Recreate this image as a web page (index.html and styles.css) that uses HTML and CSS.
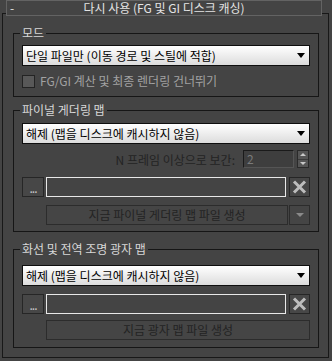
FILE: index.html
```html
<!DOCTYPE html>
<html>
  <head>
    <meta charset="utf-8">
    <link rel="stylesheet" href="styles.css">
  </head>
  <body>
    <div class="rollout">
      <div class="rollout-title">
        <span class="collapse">-</span>
        <span class="title-text">다시 사용 (FG 및 GI 디스크 캐싱)</span>
      </div>

      <div class="group group-mode">
        <div class="legend"><span>모드</span></div>
        <div class="dropdown">
          <span>단일 파일만 (이동 경로 및 스틸에 적합)</span>
          <span class="caret"></span>
        </div>
        <div class="check-row">
          <span class="checkbox"></span>
          <span class="check-label">FG/GI 계산 및 최종 렌더링 건너뛰기</span>
        </div>
      </div>

      <div class="group group-fg">
        <div class="legend"><span>파이널 게더링 맵</span></div>
        <div class="dropdown">
          <span>해제 (맵을 디스크에 캐시하지 않음)</span>
          <span class="caret"></span>
        </div>
        <div class="spinner-row">
          <span class="disabled-text">N 프레임 이상으로 보간:</span>
          <span class="spinner-input">2</span>
          <span class="spin-arrows">
            <span class="spin-up"></span>
            <span class="spin-down"></span>
          </span>
        </div>
        <div class="file-row">
          <button class="browse-btn">...</button>
          <div class="file-field"></div>
          <button class="clear-btn">
            <svg width="15" height="14" viewBox="0 0 15 14">
              <path d="M2 1.5 L13 12.5 M13 1.5 L2 12.5" stroke="#bdbdbd" stroke-width="3"/>
            </svg>
          </button>
        </div>
        <div class="generate-row">
          <button class="generate-btn">지금 파이널 게더링 맵 파일 생성</button>
          <button class="menu-btn"><span class="small-caret"></span></button>
        </div>
      </div>

      <div class="group group-photon">
        <div class="legend"><span>화선 및 전역 조명 광자 맵</span></div>
        <div class="dropdown">
          <span>해제 (맵을 디스크에 캐시하지 않음)</span>
          <span class="caret"></span>
        </div>
        <div class="file-row">
          <button class="browse-btn">...</button>
          <div class="file-field"></div>
          <button class="clear-btn">
            <svg width="15" height="14" viewBox="0 0 15 14">
              <path d="M2 1.5 L13 12.5 M13 1.5 L2 12.5" stroke="#bdbdbd" stroke-width="3"/>
            </svg>
          </button>
        </div>
        <div class="generate-row">
          <button class="generate-btn">지금 광자 맵 파일 생성</button>
        </div>
      </div>
    </div>
  </body>
</html>
```

FILE: styles.css
```css
body {
  margin: 0;
  background-color: #444444;
  font-family: "Noto Sans CJK KR", "Noto Sans", sans-serif;
  font-size: 12px;
  color: #dcdcdc;
}

.rollout {
  box-sizing: border-box;
  width: 327px;
  height: 345px;
  margin: 13px 0 0 2px;
  border: 1px solid #181818;
}

.rollout-title {
  box-sizing: border-box;
  display: flex;
  align-items: center;
  width: 316px;
  height: 16px;
  margin: -14px 0 0 3px;
  border: 1px solid #636363;
  background-color: #444444;
  line-height: 14px;
  color: #e4e4e4;
}

.collapse {
  width: 14px;
  padding-left: 3px;
  box-sizing: border-box;
}

.title-text {
  flex: 1;
  text-align: center;
  padding-right: 14px;
}

.group {
  box-sizing: border-box;
  width: 306px;
  margin-left: 10px;
  padding: 0 8px;
  border: 1px solid #161616;
}

.group-mode {
  margin-top: 17px;
  padding-bottom: 8px;
}

.group-fg {
  margin-top: 13px;
  padding-bottom: 6px;
}

.group-photon {
  margin-top: 17px;
  padding-bottom: 7px;
}

.legend {
  height: 16px;
  margin-top: -9px;
  line-height: 16px;
}

.legend span {
  margin-left: -2px;
  padding: 0 2px;
  background-color: #444444;
  color: #d8d8d8;
}

.dropdown {
  box-sizing: border-box;
  display: flex;
  align-items: center;
  justify-content: space-between;
  height: 21px;
  padding: 0 3px 0 3px;
  border: 1px solid #0e0e0e;
  background: linear-gradient(#ffffff, #dcdcdc);
  color: #000000;
  line-height: 19px;
}

.group-mode .dropdown {
  margin-top: 4px;
}

.group-fg .dropdown {
  margin-top: 5px;
}

.group-photon .dropdown {
  margin-top: 8px;
}

.caret {
  width: 0;
  height: 0;
  border-left: 4px solid transparent;
  border-right: 4px solid transparent;
  border-top: 5px solid #000000;
  margin-right: 1px;
}

.check-row {
  display: flex;
  align-items: center;
  gap: 5px;
  height: 14px;
  margin-top: 8px;
}

.checkbox {
  box-sizing: border-box;
  width: 13px;
  height: 13px;
  border: 1px solid #232323;
  background-color: #585858;
}

.check-label {
  color: #a2a2a2;
  line-height: 14px;
}

.spinner-row {
  display: flex;
  align-items: center;
  justify-content: flex-end;
  height: 18px;
  margin-top: 6px;
  padding-right: 1px;
}

.disabled-text {
  color: #232323;
  margin-right: 8px;
}

.spinner-input {
  box-sizing: border-box;
  width: 51px;
  height: 18px;
  padding-left: 3px;
  border: 1px solid #1a1a1a;
  border-right-color: #555555;
  border-bottom-color: #555555;
  background-color: #3e3e3e;
  color: #7a7a7a;
  line-height: 16px;
}

.spin-arrows {
  box-sizing: border-box;
  display: flex;
  flex-direction: column;
  width: 12px;
  height: 18px;
  margin-left: 3px;
  border: 1px solid #2a2a2a;
  background-color: #555555;
}

.spin-up,
.spin-down {
  flex: 1;
  display: flex;
  align-items: center;
  justify-content: center;
}

.spin-up {
  border-bottom: 1px solid #3a3a3a;
}

.spin-up::after {
  content: "";
  border-left: 3px solid transparent;
  border-right: 3px solid transparent;
  border-bottom: 3px solid #c8c8c8;
}

.spin-down::after {
  content: "";
  border-left: 3px solid transparent;
  border-right: 3px solid transparent;
  border-top: 3px solid #c8c8c8;
}

.file-row {
  display: flex;
  align-items: stretch;
  height: 20px;
}

.group-fg .file-row {
  margin-top: 9px;
}

.group-photon .file-row {
  margin-top: 8px;
}

button {
  margin: 0;
  padding: 0;
  font-family: inherit;
  font-size: 12px;
  box-sizing: border-box;
  border: 1px solid #262626;
  background-color: #474747;
}

.browse-btn {
  width: 22px;
  color: #c8c8c8;
  line-height: 14px;
  letter-spacing: -1px;
  padding-top: 2px;
}

.file-field {
  box-sizing: border-box;
  width: 240px;
  margin-left: 2px;
  border: 1px solid #e8e8e8;
  background-color: #444444;
}

.clear-btn {
  width: 21px;
  margin-left: 3px;
  display: flex;
  align-items: center;
  justify-content: center;
}

.generate-row {
  display: flex;
  height: 20px;
  margin-top: 8px;
  margin-left: 24px;
}

.group-photon .generate-row {
  margin-top: 6px;
}

.generate-btn {
  flex: 1;
  color: #232323;
  border-color: #2c2c2c;
  background-color: #454545;
  line-height: 16px;
}

.menu-btn {
  width: 21px;
  margin-left: 1px;
  border-color: #2c2c2c;
  background-color: #454545;
  display: flex;
  align-items: center;
  justify-content: center;
}

.small-caret {
  width: 0;
  height: 0;
  border-left: 4px solid transparent;
  border-right: 4px solid transparent;
  border-top: 4px solid #8a8a8a;
}
```
